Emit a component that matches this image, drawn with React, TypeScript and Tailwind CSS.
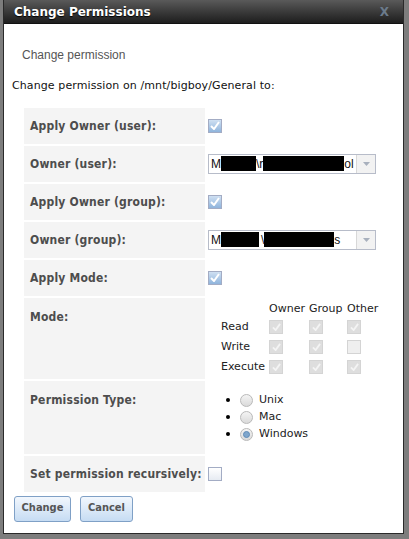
import { Fragment } from "react";

const verdana = "font-['Verdana','DejaVu_Sans',sans-serif]";

function Check({ checked = true }: { checked?: boolean }) {
  return (
    <div
      className={`w-[14px] h-[14px] border border-[#a3acc4] flex items-center justify-center ${
        checked ? "bg-gradient-to-b from-[#cfe0f2] to-[#8fb4dc]" : "bg-gradient-to-b from-[#ffffff] to-[#e6ebf2]"
      }`}
    >
      {checked && (
        <svg width="10" height="9" viewBox="0 0 10 9">
          <path d="M1 5 L4 8 L9 1" fill="none" stroke="#fff" strokeWidth="2" />
        </svg>
      )}
    </div>
  );
}

function GrayCheck({ checked = true }: { checked?: boolean }) {
  return (
    <div
      className={`w-[14px] h-[14px] border border-[#d4d4d4] flex items-center justify-center ${
        checked ? "bg-[#dedede]" : "bg-[#efefef]"
      }`}
    >
      {checked && (
        <svg width="9" height="8" viewBox="0 0 10 9">
          <path d="M1 5 L4 8 L9 1" fill="none" stroke="#f4f4f4" strokeWidth="2" />
        </svg>
      )}
    </div>
  );
}

function Radio({ on = false }: { on?: boolean }) {
  return (
    <div className="w-[13px] h-[13px] rounded-full border border-[#b9b9b9] bg-gradient-to-b from-[#f4f4f4] to-[#dadada] flex items-center justify-center">
      {on && <div className="w-[7px] h-[7px] rounded-full bg-[#7fa6cc] border border-[#5f8bb7]" />}
    </div>
  );
}

function Select({ redact }: { redact: "user" | "group" }) {
  return (
    <div className="w-[168px] h-[20px] border border-[#b7bcc9] bg-white flex">
      <div className="flex-1 flex items-center overflow-hidden pl-[2px] text-[12px] font-['Liberation_Sans',sans-serif] text-[#111] whitespace-nowrap">
        <span>M</span>
        {redact === "user" ? (
          <Fragment>
            <span className="inline-block w-[35px] h-[15px] bg-black" />
            <span>\r</span>
            <span className="inline-block w-[81px] h-[15px] bg-black" />
            <span>ol</span>
          </Fragment>
        ) : (
          <Fragment>
            <span className="inline-block w-[38px] h-[15px] bg-black" />
            <span className="ml-[2px]">\</span>
            <span className="inline-block w-[70px] h-[15px] bg-black" />
            <span>s</span>
          </Fragment>
        )}
      </div>
      <div className="w-[19px] border-l border-[#d8d8d8] bg-[#f2f2f2] flex items-center justify-center">
        <svg width="7" height="4" viewBox="0 0 7 4">
          <path d="M0 0 H7 L3.5 4 Z" fill="#a8b0bd" />
        </svg>
      </div>
    </div>
  );
}

function Row({ label, h = 36, top = false, children }: { label: string; h?: number; top?: boolean; children?: React.ReactNode }) {
  return (
    <div className="flex" style={{ height: h }}>
      <div
        className={`w-[181px] bg-[#f4f4f4] pl-[6px] text-[12px] tracking-[0.2px] font-bold text-[#4d4d4d] font-['DejaVu_Sans_Condensed','DejaVu_Sans',sans-serif] whitespace-nowrap flex ${
          top ? "items-start pt-[10px]" : "items-center"
        }`}
      >
        {label}
      </div>
      <div className="flex-1 pl-[3px] flex items-center">{children}</div>
    </div>
  );
}

export default function App() {
  return (
    <div className="w-[409px] h-[539px] bg-[#7d7d7d] pl-[3px] pr-[5px] pb-[5px]">
      <div className={`w-full h-full bg-white border-l border-r border-b border-[#2a2a2a] flex flex-col ${verdana}`}>
        <div className="h-[24px] bg-gradient-to-b from-[#5a5a5a] to-[#1e1e1e] border-b border-[#111] flex items-center justify-between pl-[10px] pr-[14px]">
          <span className="text-white font-bold text-[12px] [text-shadow:0_1px_1px_#000]">Change Permissions</span>
          <span className="text-[#6b7b8c] font-bold text-[12px]">X</span>
        </div>

        <div className="pl-[18px] mt-[22px] text-[12px] text-[#555] font-['Liberation_Sans',sans-serif]">Change permission</div>
        <div className="pl-[8px] mt-[14px] text-[11px] text-[#111] tracking-[0.1px]">Change permission on /mnt/bigboy/General to:</div>

        <div className="ml-[20px] mt-[13px] flex flex-col gap-[2px]">
          <Row label="Apply Owner (user):">
            <Check />
          </Row>
          <Row label="Owner (user):">
            <Select redact="user" />
          </Row>
          <Row label="Apply Owner (group):">
            <Check />
          </Row>
          <Row label="Owner (group):">
            <Select redact="group" />
          </Row>
          <Row label="Apply Mode:">
            <Check />
          </Row>
          <Row label="Mode:" h={81} top>
            <div className="self-start pt-[4px] pl-[13px] text-[11px] leading-[14px] text-[#222]">
              <div className="grid grid-cols-[48px_40px_38px_38px] mb-[4px]">
                <div />
                <div>Owner</div>
                <div>Group</div>
                <div>Other</div>
              </div>
              <div className="grid grid-cols-[48px_40px_38px_38px] items-center gap-y-[6px]">
                <div>Read</div>
                <GrayCheck />
                <GrayCheck />
                <GrayCheck />
                <div>Write</div>
                <GrayCheck />
                <GrayCheck />
                <GrayCheck checked={false} />
                <div>Execute</div>
                <GrayCheck />
                <GrayCheck />
                <GrayCheck />
              </div>
            </div>
          </Row>
          <Row label="Permission Type:" h={73} top>
            <div className="self-start pt-[13px] pl-[18px] flex flex-col gap-[4px] text-[11px] text-[#222]">
              {["Unix", "Mac", "Windows"].map((t) => (
                <div key={t} className="flex items-center h-[13px]">
                  <span className="w-[4px] h-[4px] rounded-full bg-black mr-[10px]" />
                  <Radio on={t === "Windows"} />
                  <span className="ml-[6px]">{t}</span>
                </div>
              ))}
            </div>
          </Row>
          <Row label="Set permission recursively:">
            <Check checked={false} />
          </Row>
        </div>

        <div className="flex gap-[9px] pl-[10px] mt-[4px]">
          {["Change", "Cancel"].map((b) => (
            <button
              key={b}
              className={`h-[26px] px-[6px] rounded-[3px] border border-[#7fa0c6] bg-gradient-to-b from-[#f2f7fd] to-[#c6dcf3] text-[11px] font-bold text-[#555] font-['DejaVu_Sans_Condensed','DejaVu_Sans',sans-serif] ${
                b === "Change" ? "w-[57px]" : "w-[53px]"
              }`}
            >
              {b}
            </button>
          ))}
        </div>
      </div>
    </div>
  );
}
